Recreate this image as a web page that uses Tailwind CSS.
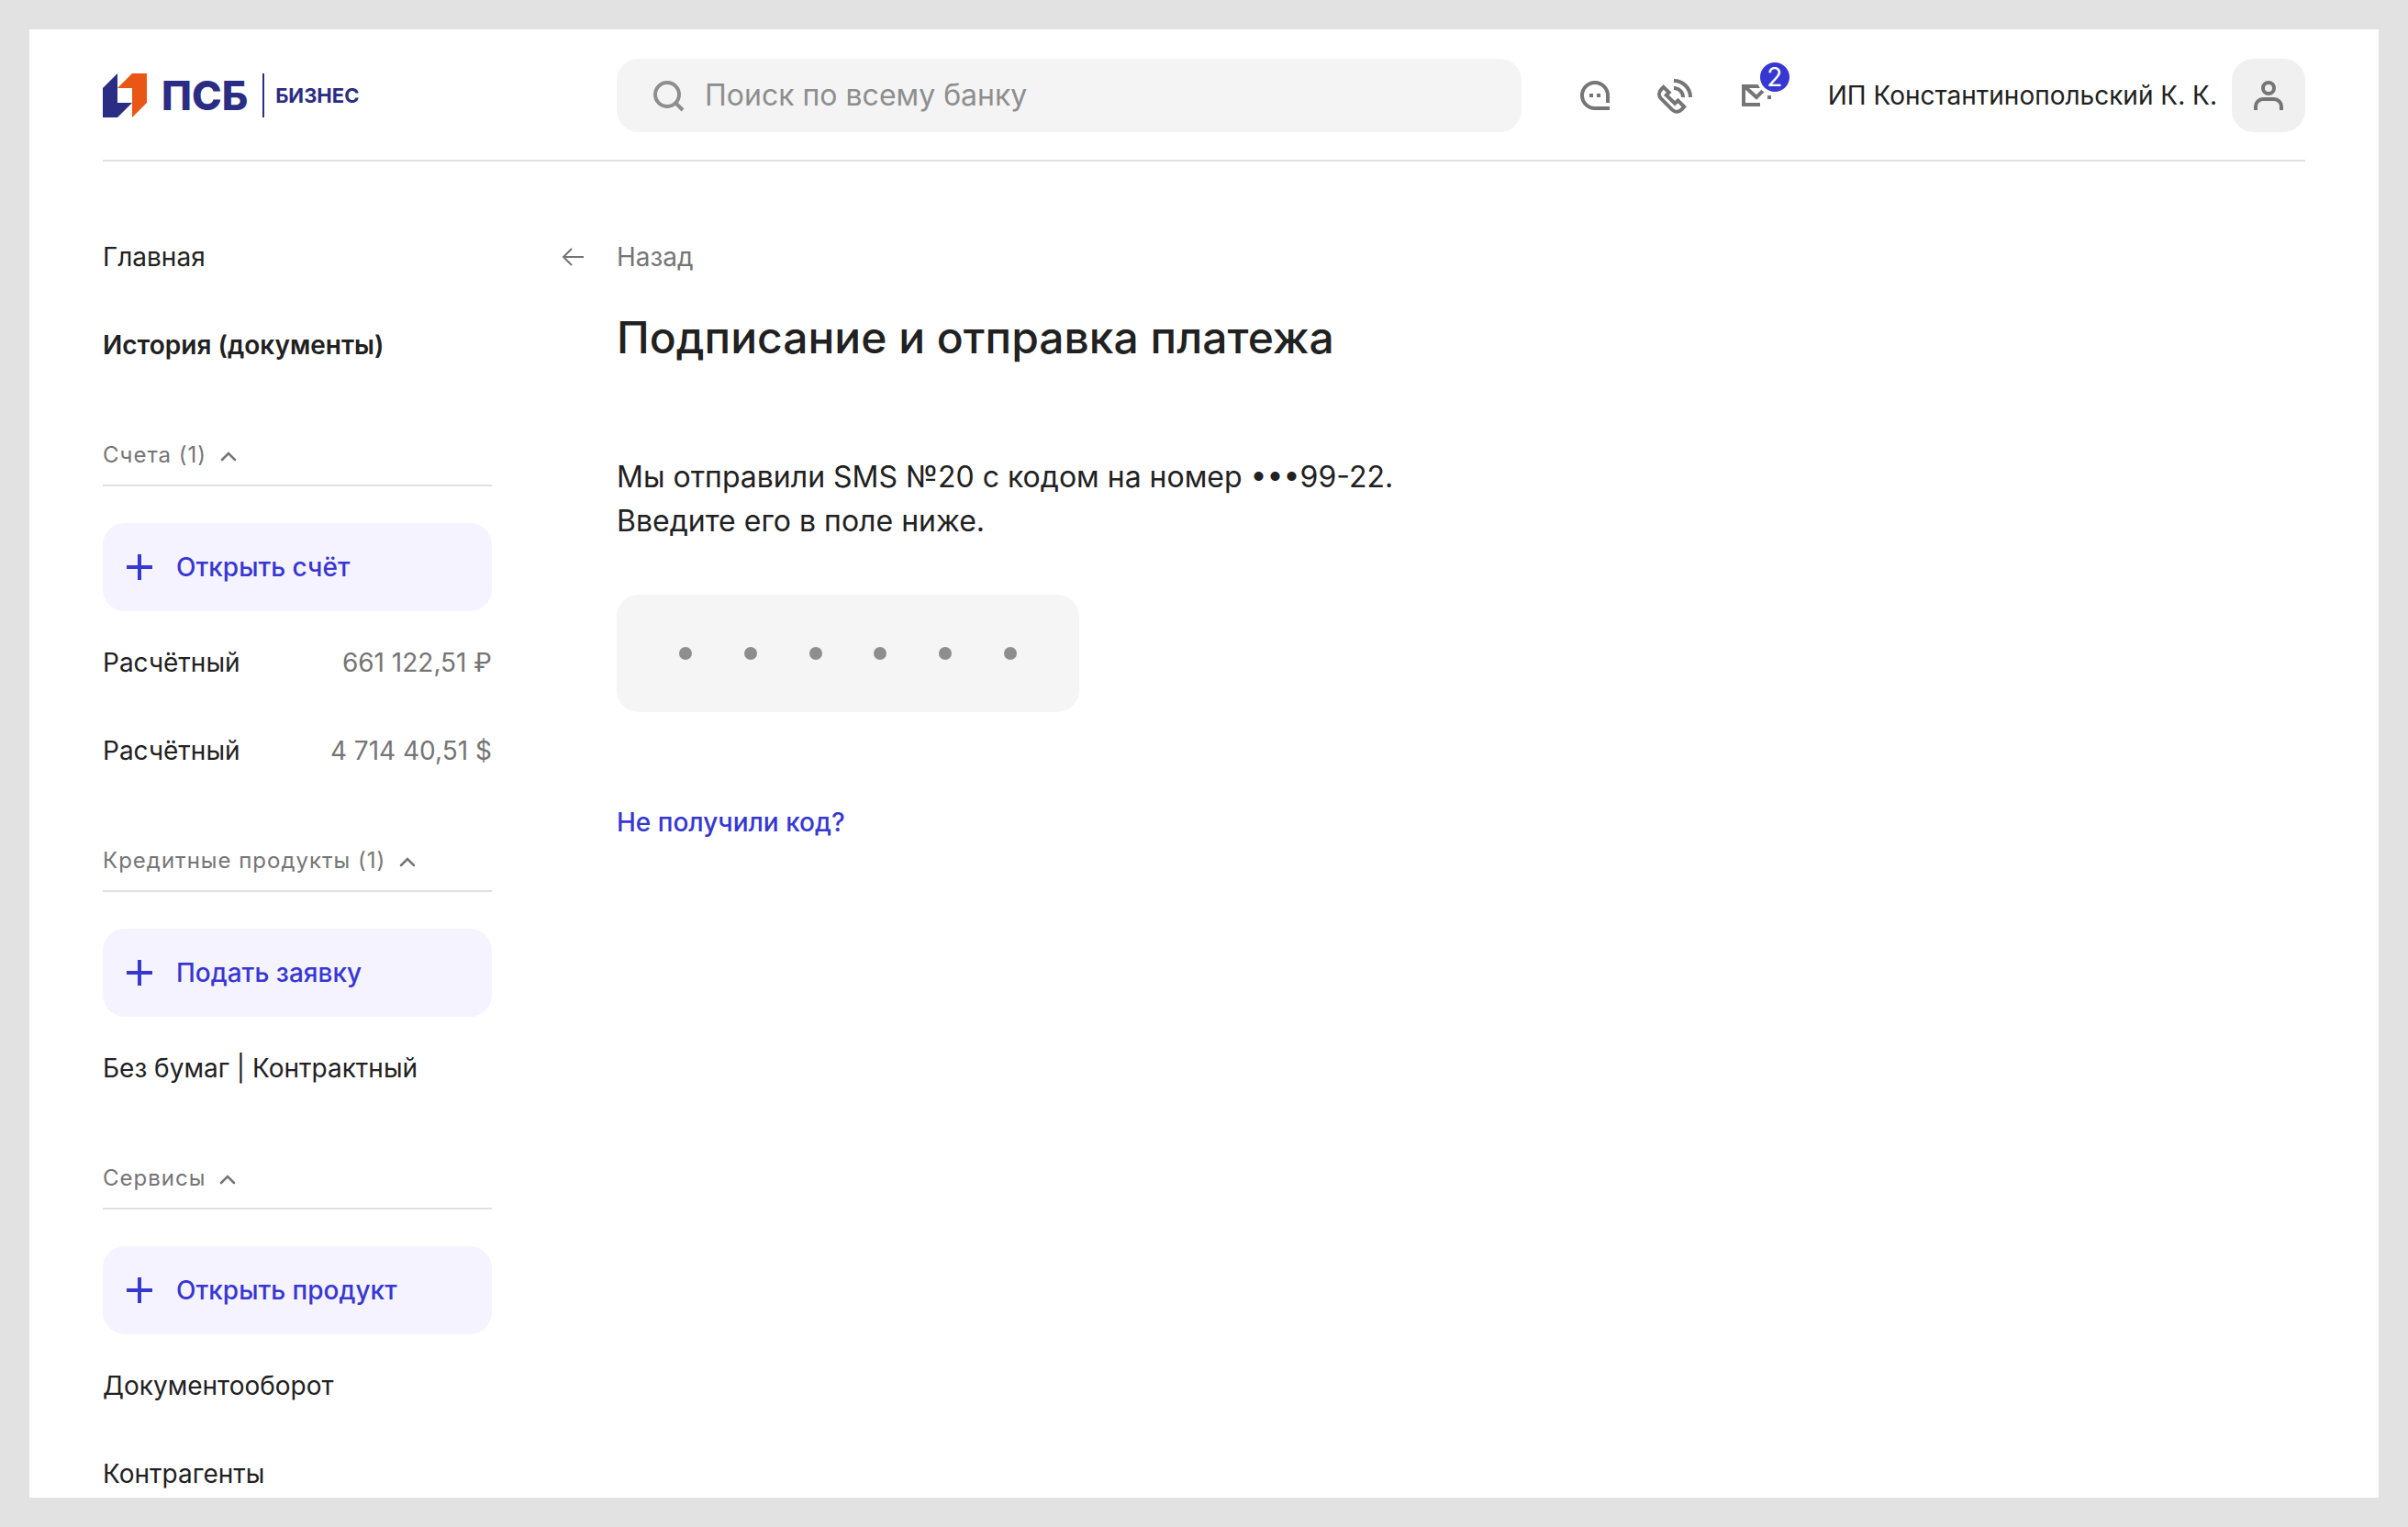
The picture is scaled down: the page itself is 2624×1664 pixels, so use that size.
<!DOCTYPE html>
<html lang="ru">
<head>
<meta charset="utf-8">
<meta name="viewport" content="width=device-width, initial-scale=1">
<title>ПСБ Бизнес</title>
<script src="https://cdn.jsdelivr.net/npm/@tailwindcss/browser@4"></script>
</head>
<body class="h-screen overflow-hidden bg-[#e2e2e2] p-8 font-['Inter',sans-serif] text-[28px] leading-10 text-[#212121]">
<div class="h-full overflow-hidden bg-white px-20">
  <header class="flex items-center border-b-2 border-[#e0e0e0] pt-8 pb-[30px]">
    <a href="#" class="flex w-[560px] shrink-0 items-center text-[#2b2d84]">
      <svg class="size-12" viewBox="0 0 48 48" aria-hidden="true"><path fill="#2b2d84" d="M0 16 16 0v32h16L16 48H0z"/><path fill="#ea5616" d="M32 0h16v32L32 48V16H16z"/></svg>
      <span class="ml-4 text-[44px] leading-12 font-extrabold">ПСБ</span>
      <span class="ml-4 h-12 w-0.5 bg-[#2b2d84]"></span>
      <span class="ml-3 text-[22px] font-bold">БИЗНЕС</span>
    </a>
    <label class="flex h-20 flex-1 items-center gap-6 rounded-3xl bg-[#f4f4f4] px-10">
      <svg class="size-8 shrink-0 overflow-visible" viewBox="0 0 32 32" fill="none" stroke="#8e8e8e" stroke-width="4" aria-hidden="true"><circle cx="15" cy="15" r="13"/><path d="m24 24 8 8"/></svg>
      <input type="search" aria-label="Поиск" placeholder="Поиск по всему банку" class="w-full bg-transparent text-[32px] leading-12 outline-none placeholder:text-[#8e8e8e]">
    </label>
    <div class="ml-[54px] flex items-center gap-10">
      <button type="button" aria-label="Чат" class="size-12">
        <svg class="size-12" viewBox="0 0 48 48" fill="none" stroke="#757575" stroke-width="4"><path d="M42 38H26a14 14 0 1 1 14-14v8"/><path fill="#757575" stroke="none" d="M20 22h4v4h-4zM28 22h4v4h-4z"/></svg>
      </button>
      <button type="button" aria-label="Звонок" class="size-12">
        <svg class="size-12" viewBox="0 0 48 48" fill="none" stroke="#757575" stroke-width="4"><path d="M24 8a18 18 0 0 1 18 18M24 16a10 10 0 0 1 10 10"/><path d="m12.7 14.8 6 6-2.9 2.9 9.3 9.1 3.4-3.2 6.7 6.8-2.8 3c-2.8 3-7.2 3-10.2.2L9.8 27.2c-2.4-2.6-2.4-6.6.1-9.3z"/></svg>
      </button>
      <button type="button" aria-label="Сообщения" class="relative size-12">
        <svg class="size-12 overflow-visible" viewBox="0 0 48 48" fill="none" stroke="#757575" stroke-width="4"><path d="M30 14H12v20h18M14 15l12 11 10-10"/><path fill="#757575" stroke="none" d="M38 24h4v4h-4z"/><circle cx="46" cy="4" r="20" fill="#fff" stroke="none"/></svg>
        <span class="absolute -top-3 left-[30px] flex size-8 items-center justify-center rounded-full bg-[#3737d2] text-[28px] leading-8 text-white">2</span>
      </button>
    </div>
    <span class="ml-14 whitespace-nowrap">ИП Константинопольский К. К.</span>
    <button type="button" aria-label="Профиль" class="ml-4 size-20 shrink-0 rounded-3xl bg-[#f0f0f0]">
      <svg class="size-20" viewBox="0 0 80 80" fill="none" stroke="#757575" stroke-width="4"><circle cx="40" cy="32" r="6"/><path d="M26 56v-4a8 8 0 0 1 8-8h12a8 8 0 0 1 8 8v4"/></svg>
    </button>
  </header>

  <div class="flex gap-[76px] pt-14">
    <nav class="w-[424px] shrink-0">
      <a href="#" class="flex h-24 items-center">Главная</a>
      <a href="#" class="flex h-24 items-center font-semibold">История (документы)</a>

      <section>
        <h2 class="border-b-2 border-[#e0e0e0] pt-[52px] pb-3 text-[24px] tracking-[1px] text-[#757575]">
          <button type="button" class="flex items-center gap-3">Счета (1)
            <svg class="size-6" viewBox="0 0 24 24" fill="none" stroke="#757575" stroke-width="2.5" stroke-linecap="round" aria-hidden="true"><path d="m5 17 7-7 7 7"/></svg>
          </button>
        </h2>
        <button type="button" class="mt-10 mb-2 flex h-24 w-full items-center gap-4 rounded-3xl bg-[#f5f3ff] px-4 font-medium text-[#3737d2]">
          <svg class="size-12" viewBox="0 0 48 48" stroke="#3737d2" stroke-width="4" aria-hidden="true"><path d="M10 24h28M24 10v28"/></svg>Открыть счёт
        </button>
        <a href="#" class="flex h-24 items-center justify-between"><span>Расчётный</span><span class="text-[#757575]">661 122,51 ₽</span></a>
        <a href="#" class="flex h-24 items-center justify-between"><span>Расчётный</span><span class="text-[#757575]">4 714 40,51 $</span></a>
      </section>

      <section>
        <h2 class="border-b-2 border-[#e0e0e0] pt-[52px] pb-3 text-[24px] tracking-[1px] text-[#757575]">
          <button type="button" class="flex items-center gap-3">Кредитные продукты (1)
            <svg class="size-6" viewBox="0 0 24 24" fill="none" stroke="#757575" stroke-width="2.5" stroke-linecap="round" aria-hidden="true"><path d="m5 17 7-7 7 7"/></svg>
          </button>
        </h2>
        <button type="button" class="mt-10 mb-2 flex h-24 w-full items-center gap-4 rounded-3xl bg-[#f5f3ff] px-4 font-medium text-[#3737d2]">
          <svg class="size-12" viewBox="0 0 48 48" stroke="#3737d2" stroke-width="4" aria-hidden="true"><path d="M10 24h28M24 10v28"/></svg>Подать заявку
        </button>
        <a href="#" class="flex h-24 items-center">Без бумаг | Контрактный</a>
      </section>

      <section>
        <h2 class="border-b-2 border-[#e0e0e0] pt-[52px] pb-3 text-[24px] tracking-[1px] text-[#757575]">
          <button type="button" class="flex items-center gap-3">Сервисы
            <svg class="size-6" viewBox="0 0 24 24" fill="none" stroke="#757575" stroke-width="2.5" stroke-linecap="round" aria-hidden="true"><path d="m5 17 7-7 7 7"/></svg>
          </button>
        </h2>
        <button type="button" class="mt-10 mb-2 flex h-24 w-full items-center gap-4 rounded-3xl bg-[#f5f3ff] px-4 font-medium text-[#3737d2]">
          <svg class="size-12" viewBox="0 0 48 48" stroke="#3737d2" stroke-width="4" aria-hidden="true"><path d="M10 24h28M24 10v28"/></svg>Открыть продукт
        </button>
        <a href="#" class="flex h-24 items-center">Документооборот</a>
        <a href="#" class="flex h-24 items-center">Контрагенты</a>
      </section>
    </nav>

    <main class="min-w-0 flex-1">
      <a href="#" class="flex h-24 items-center gap-9 text-[#757575]">
        <svg class="size-6" viewBox="0 0 24 24" fill="none" stroke="#757575" stroke-width="2" aria-hidden="true"><path d="M24 12H2M11 3l-9 9 9 9"/></svg>Назад
      </a>
      <div class="pl-[60px]">
        <h1 class="mt-2 text-[48px] leading-16 font-medium">Подписание и отправка платежа</h1>
        <p class="mt-24 text-[32px] leading-12">Мы отправили SMS №20 с кодом на номер •••99-22.<br>Введите его в поле ниже.</p>
        <div class="relative mt-14 w-[504px]">
          <input type="text" inputmode="numeric" maxlength="6" aria-label="Код из SMS" class="block h-32 w-full rounded-3xl bg-[#f5f5f5] px-16 outline-none">
          <div class="pointer-events-none absolute inset-0 flex items-center justify-between px-[68px]" aria-hidden="true">
            <span class="size-3.5 rounded-full bg-[#8e8e8e]"></span>
            <span class="size-3.5 rounded-full bg-[#8e8e8e]"></span>
            <span class="size-3.5 rounded-full bg-[#8e8e8e]"></span>
            <span class="size-3.5 rounded-full bg-[#8e8e8e]"></span>
            <span class="size-3.5 rounded-full bg-[#8e8e8e]"></span>
            <span class="size-3.5 rounded-full bg-[#8e8e8e]"></span>
          </div>
        </div>
        <a href="#" class="mt-[100px] inline-block font-medium text-[#3737d2]">Не получили код?</a>
      </div>
    </main>
  </div>
</div>
</body>
</html>
